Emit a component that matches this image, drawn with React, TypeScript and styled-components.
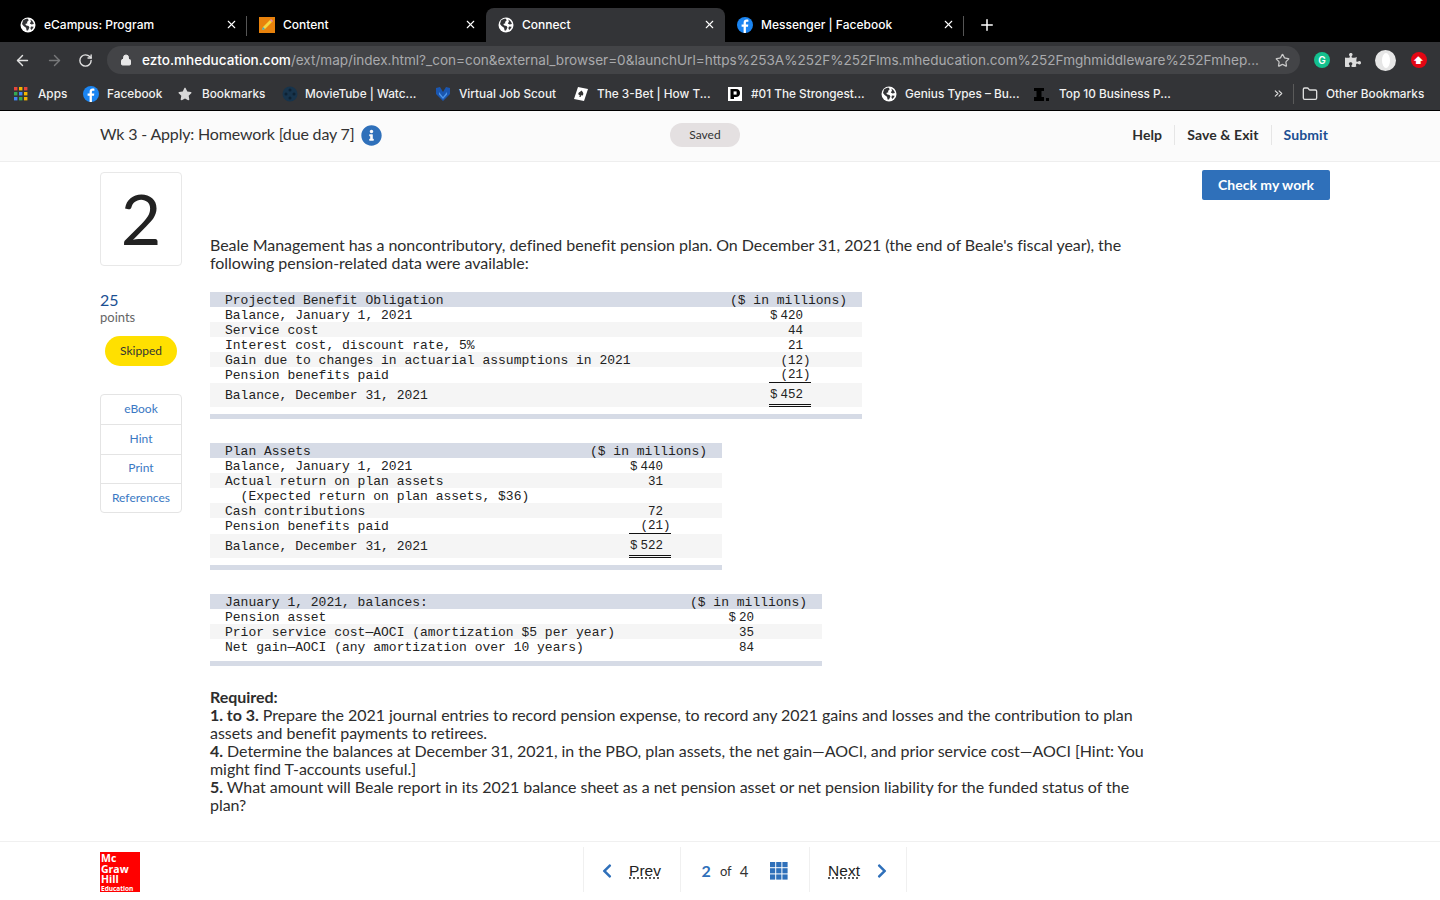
import React from 'react';
import styled, { createGlobalStyle } from 'styled-components';
import { ArrowLeft, ArrowRight, RotateCw, Star, X, Plus, Lock, Folder, ChevronsRight } from 'lucide-react';
import { FaChevronLeft, FaChevronRight, FaInfoCircle, FaPuzzlePiece, FaStar } from 'react-icons/fa';

const GlobalStyle = createGlobalStyle`
  html, body { margin: 0; padding: 0; background: #fff; }
  * { box-sizing: border-box; }
`;

const BODY_FONT = `Lato, 'Open Sans', sans-serif`;
const CHROME_FONT = `Inter, Roboto, sans-serif`;
const MONO_FONT = `'Liberation Mono', monospace`;

const Page = styled.div`
  width: 1440px;
  height: 900px;
  display: flex;
  flex-direction: column;
  overflow: hidden;
  font-family: ${BODY_FONT};
  color: #2d2d2d;
`;

/* browser chrome */
const TabStrip = styled.div`
  height: 42px;
  background: #000;
  display: flex;
  align-items: flex-end;
  padding-left: 8px;
  font-family: ${CHROME_FONT};
`;

const Tab = styled.div<{ $active?: boolean; $divider?: boolean }>`
  width: 239px;
  height: 34px;
  padding: 0 9px 1px 12px;
  display: flex;
  align-items: center;
  gap: 8px;
  border-radius: 8px 8px 0 0;
  background: ${(p) => (p.$active ? '#333437' : 'transparent')};
  position: relative;
  color: #fff;
  font-size: 12px;
  font-weight: 500;

  &::after {
    content: '';
    display: ${(p) => (p.$divider ? 'block' : 'none')};
    position: absolute;
    right: 0;
    top: 8px;
    height: 20px;
    width: 1px;
    background: #555;
  }
`;

const TabTitle = styled.span`
  flex: 1;
  white-space: nowrap;
`;

const NewTab = styled.div`
  height: 34px;
  margin-left: 14px;
  display: flex;
  align-items: center;
  color: #fff;
`;

const Toolbar = styled.div`
  height: 36px;
  background: #333437;
  display: flex;
  align-items: center;
  padding: 0 12px 0 14px;
  font-family: ${CHROME_FONT};
`;

const NavIcons = styled.div`
  display: flex;
  align-items: center;
  gap: 15px;
  width: 93px;
`;

const Omnibox = styled.div`
  width: 1193px;
  height: 28px;
  border-radius: 14px;
  background: #434447;
  display: flex;
  align-items: center;
  padding: 0 10px 0 13px;
  gap: 10px;
  font-size: 13.55px;
  color: #a9aaad;
  white-space: nowrap;
`;

const Url = styled.div`
  flex: 1;
  padding-bottom: 1px;

  b {
    color: #fff;
    font-weight: 500;
  }
`;

const Extensions = styled.div`
  display: flex;
  align-items: center;
  gap: 14.5px;
  margin-left: 14px;
`;

const ExtensionDot = styled.div<{ $bg: string; $w?: number; $h?: number }>`
  width: ${(p) => p.$w ?? 21}px;
  height: ${(p) => p.$h ?? 21}px;
  border-radius: 50%;
  background: ${(p) => p.$bg};
  color: #fff;
  display: flex;
  align-items: center;
  justify-content: center;
  font-size: 10px;
  font-weight: 600;
`;

const BookmarkBar = styled.div`
  height: 33px;
  background: #333437;
  border-bottom: 1px solid #000;
  display: flex;
  align-items: center;
  padding: 0 0 1px 14px;
  font-family: ${CHROME_FONT};
  font-size: 11.8px;
  font-weight: 500;
  color: #f1f1f1;
`;

const Bookmark = styled.div<{ $w: number; $gap?: number }>`
  width: ${(p) => p.$w}px;
  flex: none;
  display: flex;
  align-items: center;
  gap: ${(p) => p.$gap ?? 8}px;
  white-space: nowrap;
`;

const BookmarkEnd = styled.div`
  margin-left: 33px;
  display: flex;
  align-items: center;
  gap: 8px;
  white-space: nowrap;
`;

const BarDivider = styled.div`
  width: 1px;
  height: 20px;
  background: #5a5a5a;
  margin-right: 0;
`;

/* assignment header */
const AppHeader = styled.header`
  height: 51px;
  background: #fbfbfb;
  border-bottom: 1px solid #eee;
  display: flex;
  align-items: center;
  padding: 0 112px 2px 100px;
`;

const Title = styled.h1`
  margin: 0;
  width: 570px;
  display: flex;
  align-items: center;
  gap: 7px;
  font-size: 16px;
  line-height: 20px;
  letter-spacing: -0.17px;
  font-weight: 400;
  color: #333;

  span {
    margin-top: -2px;
  }
`;

const SavedPill = styled.div`
  width: 70px;
  height: 24px;
  padding-bottom: 2px;
  border-radius: 12px;
  background: #e4e0e1;
  font-size: 12px;
  color: #333;
  display: flex;
  align-items: center;
  justify-content: center;
`;

const HeaderActions = styled.nav`
  margin-left: auto;
  display: flex;
  align-items: center;
`;

const HeaderAction = styled.span<{ $divided?: boolean; $primary?: boolean }>`
  font-size: 14px;
  font-weight: 700;
  letter-spacing: 0.1px;
  padding: 0 12px;
  line-height: 20px;
  color: ${(p) => (p.$primary ? '#1b4f92' : '#2d2d2d')};
  border-left: ${(p) => (p.$divided ? '1px solid #e6e6e6' : 'none')};

  &:last-child {
    padding-right: 0;
  }
`;

/* main */
const Main = styled.main`
  flex: 1;
  min-height: 0;
  display: flex;
  padding: 8px 110px 0 100px;
`;

const Sidebar = styled.aside`
  width: 82px;
  flex: none;
  padding-top: 2px;
`;

const NumberCard = styled.div`
  height: 94px;
  padding-bottom: 3px;
  border: 1px solid #e8e8e8;
  border-radius: 4px;
  display: flex;
  align-items: center;
  justify-content: center;
  font-size: 70px;
  line-height: 1;
  color: #222;
`;

const PointsValue = styled.div`
  margin-top: 25px;
  font-size: 16px;
  line-height: 18px;
  color: #1b4f92;
`;

const PointsLabel = styled.div`
  font-size: 13px;
  line-height: 17px;
  color: #666;
`;

const StatusPill = styled.div`
  margin: 10px 5px 0;
  width: 72px;
  height: 30px;
  padding-bottom: 1px;
  border-radius: 15px;
  background: #ffe000;
  font-size: 12px;
  display: flex;
  align-items: center;
  justify-content: center;
  color: #333;
`;

const ToolLinks = styled.div`
  margin-top: 28px;
  border: 1px solid #e4e4e4;
  border-radius: 4px;
  overflow: hidden;
`;

const ToolLink = styled.div`
  height: 29.3px;
  padding-bottom: 1.5px;
  display: flex;
  align-items: center;
  justify-content: center;
  font-size: 12px;
  color: #3a78c3;

  & + & {
    border-top: 1px solid #e4e4e4;
  }
`;

const Content = styled.section`
  width: 940px;
  flex: none;
  margin-left: 28px;
  padding-top: 66px;
  font-size: 16px;
  letter-spacing: -0.035px;
  line-height: 18px;
  color: #2d2d2d;
`;

const Paragraph = styled.p`
  margin: 0;
`;

const DataTable = styled.div<{ $width: number }>`
  width: ${(p) => p.$width}px;
  margin-top: 20px;
  font-family: ${MONO_FONT};
  font-size: 13px;
  letter-spacing: 0;
  color: #222;

  & + & {
    margin-top: 24px;
  }
`;

const HeaderRow = styled.div`
  height: 15px;
  background: #d6dbe6;
  padding: 0 15px;
  display: flex;
  justify-content: space-between;
  line-height: 17px;
  white-space: pre;
`;

const Row = styled.div<{ $striped?: boolean; $h?: number; $gutter: number }>`
  height: ${(p) => p.$h ?? 15}px;
  background: ${(p) => (p.$striped ? '#f5f5f5' : '#fff')};
  padding: 0 ${(p) => p.$gutter}px 0 15px;
  display: flex;
  justify-content: space-between;
  line-height: 17px;
  white-space: pre;
`;

const RowLabel = styled.span<{ $center?: boolean }>`
  align-self: ${(p) => (p.$center ? 'center' : 'flex-start')};
`;

const Amount = styled.span<{ $rule?: 'single' | 'double'; $negative?: boolean }>`
  width: 42px;
  flex: none;
  text-align: right;
  font-size: 12.5px;
  padding-right: ${(p) => (p.$negative ? 0.5 : 8)}px;
  height: ${(p) => (p.$rule === 'double' ? '24px' : p.$rule === 'single' ? '16px' : '15px')};
  border-bottom: ${(p) =>
    p.$rule === 'double' ? '3px double #111' : p.$rule === 'single' ? '1px solid #111' : 'none'};
  padding-top: ${(p) => (p.$rule === 'double' ? 4 : p.$rule === 'single' ? 0 : 1)}px;
`;

const Dollar = styled.span`
  margin-right: 3px;
`;

const EndBar = styled.div`
  height: 5px;
  margin-top: 7px;
  background: #d6dbe6;
`;

const Required = styled.div`
  margin-top: 22px;
`;

const CheckColumn = styled.div`
  margin-left: auto;
`;

const CheckButton = styled.button`
  width: 128px;
  height: 30px;
  padding: 0 0 2px;
  border: 0;
  border-radius: 2px;
  background: #2f70ba;
  color: #fff;
  font-family: ${BODY_FONT};
  font-size: 14px;
  font-weight: 700;
`;

/* footer */
const Footer = styled.footer`
  height: 59px;
  border-top: 1px solid #f0f0f0;
  display: flex;
  padding: 5px 0 0 100px;
`;

const Logo = styled.div`
  width: 40px;
  height: 40px;
  margin-top: 5px;
  background: #f00;
  color: #fff;
  font-family: 'Open Sans', sans-serif;
  font-size: 10.5px;
  font-weight: 700;
  line-height: 10.5px;
  padding: 1px 0 0 1px;
  overflow: hidden;

  small {
    display: block;
    font-size: 6.5px;
    line-height: 7px;
  }
`;

const Pager = styled.nav`
  margin-left: 443px;
  height: 45px;
  display: flex;
  border-right: 1px solid #f0f0f0;
`;

const PagerCell = styled.div<{ $w: number; $shift?: number }>`
  width: ${(p) => p.$w}px;
  border-left: 1px solid #f0f0f0;
  display: flex;
  align-items: center;
  justify-content: center;
  padding-top: 2px;
  padding-left: ${(p) => (p.$shift && p.$shift > 0 ? p.$shift : 0)}px;
  padding-right: ${(p) => (p.$shift && p.$shift < 0 ? -p.$shift : 0)}px;
  color: #2f70ba;
`;

const PagerLink = styled.span`
  font-family: 'Liberation Sans', sans-serif;
  font-size: 15.5px;
  color: #222;
  text-decoration: underline dotted;
  text-underline-offset: 2px;
  margin: 0 14px;
`;

const PageNow = styled.b`
  font-size: 16px;
  color: #2f70ba;
`;

const PageOf = styled.span`
  font-size: 13px;
  color: #333;
  margin: 0 8px 0 9px;
`;

const PageTotal = styled.span`
  font-size: 15px;
  color: #333;
  margin-right: 22px;
`;

const Globe = () => (
  <svg width="16" height="16" viewBox="0 0 16 16">
    <circle cx="8" cy="8" r="7.5" fill="#fff" />
    <path
      d="M3 3.5 C4.5 2 6.5 1.6 8 1.8 L8.6 3.5 7 5 7.4 6.2 5.2 7 6.4 8.6 8.6 9 9.4 10.6 8 13.4 6.6 13.6 6 10.8 3.6 9 2 7 Z M10.2 2.6 C12 3.4 13.4 5 13.9 7 L11.6 7.6 9.8 6.4 11 4.6 Z M11 9.6 L13.6 9.8 C13.2 11 12.4 12.2 11.2 13 L10.4 11.2 Z"
      fill="#333437"
    />
  </svg>
);

const FacebookIcon = ({ size = 16 }: { size?: number }) => (
  <svg width={size} height={size} viewBox="0 0 16 16">
    <circle cx="8" cy="8" r="8" fill="#1b85f2" />
    <path d="M8.9 16 V9.7 H11 L11.3 7.4 H8.9 V6 C8.9 5.3 9.2 4.8 10.1 4.8 H11.4 V2.8 C11 2.7 10.3 2.6 9.6 2.6 C7.8 2.6 6.6 3.7 6.6 5.7 V7.4 H4.6 V9.7 H6.6 V16 Z" fill="#fff" />
  </svg>
);

const PencilIcon = () => (
  <svg width="16" height="16" viewBox="0 0 16 16">
    <rect width="16" height="16" fill="#e8820c" />
    <path d="M3 13 L4 10 L11 3 L13 5 L6 12 Z" fill="#f5d742" />
    <path d="M11 3 L12 2 L14 4 L13 5 Z" fill="#e88ab0" />
    <path d="M3 13 L4 10 L6 12 Z" fill="#3aa7c9" />
  </svg>
);

const AppsIcon = () => (
  <svg width="14" height="14" viewBox="0 0 14 14">
    {['#e8453c', '#f4b400', '#e8453c', '#34a853', '#4285f4', '#f4b400', '#4285f4', '#34a853', '#f4b400'].map((fill, i) => (
      <rect key={i} x={(i % 3) * 5} y={Math.floor(i / 3) * 5} width="3.4" height="3.4" fill={fill} />
    ))}
  </svg>
);

const MovieIcon = () => (
  <svg width="16" height="16" viewBox="0 0 16 16">
    <circle cx="8" cy="8" r="7.5" fill="#17344c" />
    <circle cx="8" cy="4" r="1.5" fill="#0d2233" />
    <circle cx="8" cy="12" r="1.5" fill="#0d2233" />
    <circle cx="4" cy="8" r="1.5" fill="#0d2233" />
    <circle cx="12" cy="8" r="1.5" fill="#0d2233" />
  </svg>
);

const ScoutIcon = () => (
  <svg width="16" height="16" viewBox="0 0 16 16">
    <path d="M1 2 L5 1 L8 6 L11 1 L15 2 L15 8 L8 15 L1 8 Z" fill="#1a56b0" />
    <path d="M4 6 L8 11 L12 6 L12 8.5 L8 13 L4 8.5 Z" fill="#4d94e8" />
  </svg>
);

const CardIcon = () => (
  <svg width="16" height="16" viewBox="0 0 16 16">
    <path d="M5 1 L15 3 L11 15 L1 13 Z" fill="#fff" />
    <path d="M8.5 4.5 C9.5 6 11 7 10 9 C9.4 10 8.4 9.6 8 9 L7.8 11 L6 10.5 L7 9 C6 9.2 5 8.4 5.4 7.2 C5.8 6 7.6 5.8 8.5 4.5 Z" fill="#333" />
  </svg>
);

const SquareDIcon = () => (
  <svg width="16" height="16" viewBox="0 0 16 16">
    <rect x="1" y="1" width="14" height="14" fill="#fff" />
    <path d="M3.5 3 H9 C12 3 13 5 13 7 C13 9.5 11.5 11 9 11 H7 V13 H3.5 Z" fill="#000" />
    <rect x="6.6" y="5.4" width="3" height="3.2" fill="#fff" />
  </svg>
);

const SlabIcon = () => (
  <svg width="18" height="16" viewBox="0 0 18 16">
    <path d="M1 2 H11 V5 H8.5 V11 H11 V15 H1 V11 H3.5 V5 H1 Z" fill="#000" />
    <rect x="13" y="12" width="3" height="3" fill="#000" />
  </svg>
);

const GridIcon = () => (
  <svg width="18" height="18" viewBox="0 0 18 18" fill="#2f70ba">
    {[0, 1, 2, 3, 4, 5, 6, 7, 8].map((i) => (
      <rect key={i} x={(i % 3) * 6.2} y={Math.floor(i / 3) * 6.2} width="5.2" height="5.2" />
    ))}
  </svg>
);

const tabs = [
  { title: 'eCampus: Program', icon: <Globe />, divider: true },
  { title: 'Content', icon: <PencilIcon /> },
  { title: 'Connect', icon: <Globe />, active: true },
  { title: 'Messenger | Facebook', icon: <FacebookIcon />, divider: true },
];

const bookmarks = [
  { label: 'Apps', icon: <AppsIcon />, w: 69, gap: 10 },
  { label: 'Facebook', icon: <FacebookIcon />, w: 95 },
  { label: 'Bookmarks', icon: <FaStar size={14} color="#d8d8d8" />, w: 104, gap: 10 },
  { label: 'MovieTube | Watc...', icon: <MovieIcon />, w: 153, gap: 7 },
  { label: 'Virtual Job Scout', icon: <ScoutIcon />, w: 138 },
  { label: 'The 3-Bet | How T...', icon: <CardIcon />, w: 154 },
  { label: '#01 The Strongest...', icon: <SquareDIcon />, w: 154 },
  { label: 'Genius Types – Bu...', icon: <Globe />, w: 152 },
  { label: 'Top 10 Business P...', icon: <SlabIcon />, w: 206 },
];

type TableRow = { label: string; amount?: React.ReactNode; negative?: boolean; rule?: 'single' | 'double' };

const Money = ({ value }: { value: number }) => (
  <>
    <Dollar>$</Dollar>
    {value}
  </>
);

const obligationRows: TableRow[] = [
  { label: 'Balance, January 1, 2021', amount: <Money value={420} /> },
  { label: 'Service cost', amount: '44' },
  { label: 'Interest cost, discount rate, 5%', amount: '21' },
  { label: 'Gain due to changes in actuarial assumptions in 2021', amount: '(12)', negative: true },
  { label: 'Pension benefits paid', amount: '(21)', negative: true, rule: 'single' },
  { label: 'Balance, December 31, 2021', amount: <Money value={452} />, rule: 'double' },
];

const assetRows: TableRow[] = [
  { label: 'Balance, January 1, 2021', amount: <Money value={440} /> },
  { label: 'Actual return on plan assets', amount: '31' },
  { label: '  (Expected return on plan assets, $36)' },
  { label: 'Cash contributions', amount: '72' },
  { label: 'Pension benefits paid', amount: '(21)', negative: true, rule: 'single' },
  { label: 'Balance, December 31, 2021', amount: <Money value={522} />, rule: 'double' },
];

const balanceRows: TableRow[] = [
  { label: 'Pension asset', amount: <Money value={20} /> },
  { label: 'Prior service cost—AOCI (amortization $5 per year)', amount: '35' },
  { label: 'Net gain—AOCI (any amortization over 10 years)', amount: '84' },
];

const FinancialTable = ({
  heading,
  rows,
  width,
  gutter,
}: {
  heading: string;
  rows: TableRow[];
  width: number;
  gutter: number;
}) => (
  <DataTable $width={width}>
    <HeaderRow>
      <span>{heading}</span>
      <span>($ in millions)</span>
    </HeaderRow>
    {rows.map((row, i) => (
      <Row
        key={row.label}
        $striped={i % 2 === 1}
        $gutter={gutter}
        $h={row.rule === 'double' ? 24 : row.rule === 'single' ? 16 : 15}
      >
        <RowLabel $center={row.rule === 'double'}>{row.label}</RowLabel>
        {row.amount !== undefined && (
          <Amount $rule={row.rule} $negative={row.negative}>
            {row.amount}
          </Amount>
        )}
      </Row>
    ))}
    <EndBar />
  </DataTable>
);

export default function App() {
  return (
    <>
      <GlobalStyle />
      <Page>
        <TabStrip>
          {tabs.map((tab) => (
            <Tab key={tab.title} $active={tab.active} $divider={tab.divider}>
              {tab.icon}
              <TabTitle>{tab.title}</TabTitle>
              <X size={13} strokeWidth={2} />
            </Tab>
          ))}
          <NewTab>
            <Plus size={18} strokeWidth={2} />
          </NewTab>
        </TabStrip>

        <Toolbar>
          <NavIcons>
            <ArrowLeft size={17} color="#e2e2e2" strokeWidth={2} />
            <ArrowRight size={17} color="#77787a" strokeWidth={2} />
            <RotateCw size={15} color="#e2e2e2" strokeWidth={2.2} />
          </NavIcons>
          <Omnibox>
            <Lock size={12} color="#e8e8e8" fill="#e8e8e8" />
            <Url>
              <b>ezto.mheducation.com</b>/ext/map/index.html?_con=con&amp;external_browser=0&amp;launchUrl=https%253A%252F%252Flms.mheducation.com%252Fmghmiddleware%252Fmhep...
            </Url>
            <Star size={15} color="#c8c8c8" />
          </Omnibox>
          <Extensions>
            <ExtensionDot $bg="#14c08e" $w={16} $h={16}>G</ExtensionDot>
            <FaPuzzlePiece size={16} color="#dcdcdc" />
            <ExtensionDot $bg="#e6e6e6">
              <ExtensionDot $bg="#fff" $w={8} $h={15} />
            </ExtensionDot>
            <ExtensionDot $bg="#e30613" $w={16} $h={16}>⬆</ExtensionDot>
          </Extensions>
        </Toolbar>

        <BookmarkBar>
          {bookmarks.map((b) => (
            <Bookmark key={b.label} $w={b.w} $gap={b.gap}>
              {b.icon}
              <span>{b.label}</span>
            </Bookmark>
          ))}
          <BookmarkEnd>
            <ChevronsRight size={13} color="#ddd" />
            <BarDivider />
            <Folder size={16} color="#ddd" />
            <span>Other Bookmarks</span>
          </BookmarkEnd>
        </BookmarkBar>

        <AppHeader>
          <Title>
            <span>Wk 3 - Apply: Homework [due day 7]</span>
            <FaInfoCircle size={21} color="#2f70ba" />
          </Title>
          <SavedPill>Saved</SavedPill>
          <HeaderActions>
            <HeaderAction>Help</HeaderAction>
            <HeaderAction $divided>Save &amp; Exit</HeaderAction>
            <HeaderAction $divided $primary>Submit</HeaderAction>
          </HeaderActions>
        </AppHeader>

        <Main>
          <Sidebar>
            <NumberCard>2</NumberCard>
            <PointsValue>25</PointsValue>
            <PointsLabel>points</PointsLabel>
            <StatusPill>Skipped</StatusPill>
            <ToolLinks>
              <ToolLink>eBook</ToolLink>
              <ToolLink>Hint</ToolLink>
              <ToolLink>Print</ToolLink>
              <ToolLink>References</ToolLink>
            </ToolLinks>
          </Sidebar>

          <Content>
            <Paragraph>
              Beale Management has a noncontributory, defined benefit pension plan. On December 31, 2021 (the end of Beale's fiscal year), the following pension-related data were available:
            </Paragraph>
            <FinancialTable heading="Projected Benefit Obligation" rows={obligationRows} width={652} gutter={51} />
            <FinancialTable heading="Plan Assets" rows={assetRows} width={512} gutter={51} />
            <FinancialTable heading="January 1, 2021, balances:" rows={balanceRows} width={612} gutter={60} />
            <Required>
              <b>Required:</b>
              <br />
              <b>1. to 3.</b> Prepare the 2021 journal entries to record pension expense, to record any 2021 gains and losses and the contribution to plan assets and benefit payments to retirees.
              <br />
              <b>4.</b> Determine the balances at December 31, 2021, in the PBO, plan assets, the net gain—AOCI, and prior service cost—AOCI [Hint: You might find T-accounts useful.]
              <br />
              <b>5.</b> What amount will Beale report in its 2021 balance sheet as a net pension asset or net pension liability for the funded status of the plan?
            </Required>
          </Content>

          <CheckColumn>
            <CheckButton>Check my work</CheckButton>
          </CheckColumn>
        </Main>

        <Footer>
          <Logo>
            Mc
            <br />
            Graw
            <br />
            Hill
            <small>Education</small>
          </Logo>
          <Pager>
            <PagerCell $w={97} $shift={10}>
              <FaChevronLeft size={16} />
              <PagerLink>Prev</PagerLink>
            </PagerCell>
            <PagerCell $w={129}>
              <PageNow>2</PageNow>
              <PageOf>of</PageOf>
              <PageTotal>4</PageTotal>
              <GridIcon />
            </PagerCell>
            <PagerCell $w={97} $shift={-12}>
              <PagerLink>Next</PagerLink>
              <FaChevronRight size={16} />
            </PagerCell>
          </Pager>
        </Footer>
      </Page>
    </>
  );
}
